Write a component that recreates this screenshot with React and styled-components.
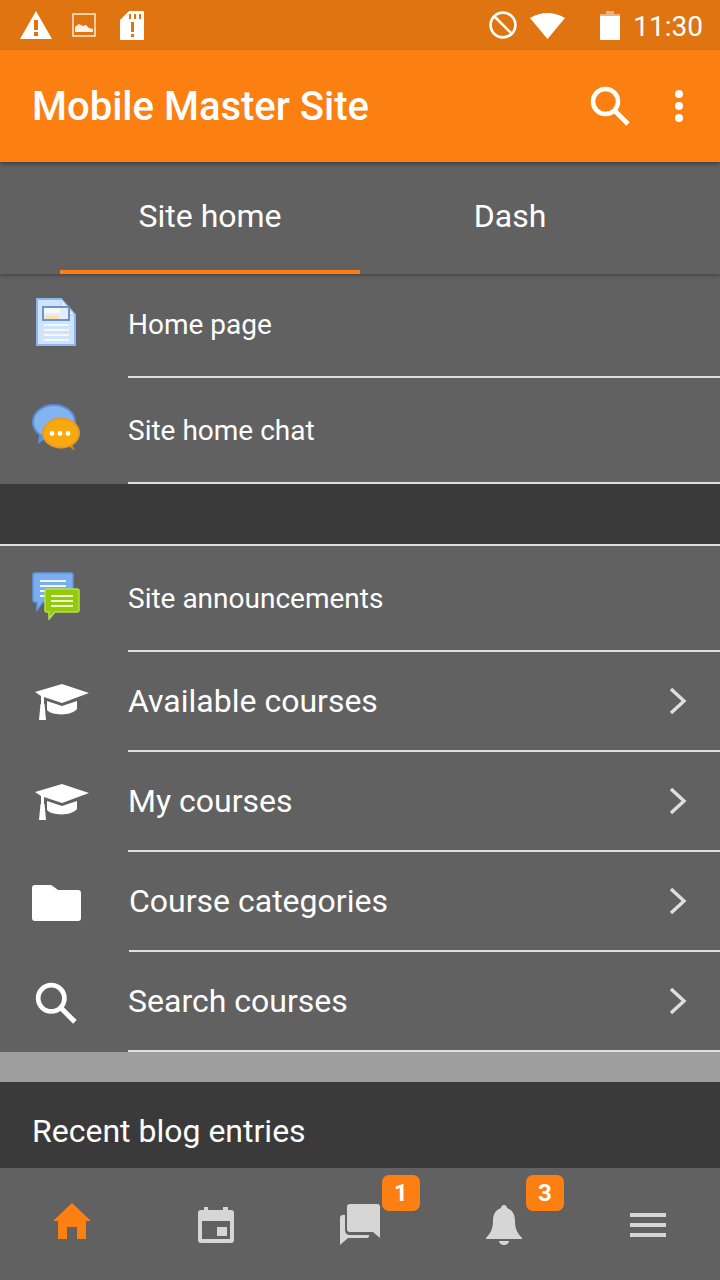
import React from 'react'
import styled, { createGlobalStyle } from 'styled-components'

const GlobalStyle = createGlobalStyle`
  html, body { margin: 0; padding: 0; background: #616161; }
  body { font-family: Roboto, "Liberation Sans", sans-serif; }
`

const WarningIcon = () => (
  <svg width="32" height="28" viewBox="0 0 32 28">
    <path fill="#fff" fillRule="evenodd" d="M16 0 32 28H0ZM14 9v10h4V9ZM14 21v4h4v-4Z" />
  </svg>
)

const PictureIcon = () => (
  <svg width="24" height="24" viewBox="0 0 24 24">
    <rect x="1" y="1" width="22" height="22" fill="none" stroke="#fbe6d2" strokeWidth="1.600" />
    <path fill="#fff2e6" d="M3 19V14L7 11 11 13 14 12 17 15 21 16V19Z" />
  </svg>
)

const SdAlertIcon = () => (
  <svg width="24" height="29" viewBox="0 0 24 29">
    <path fill="#fff" fillRule="evenodd" d="M9 0H23Q24 0 24 1V29H0V9ZM9 3V8H11V3ZM14 3V8H16V3ZM19 3V8H21V3ZM11 11V21H14V11ZM11 23V26H14V23Z" />
  </svg>
)

const BlockIcon = () => (
  <svg width="28" height="28" viewBox="0 0 28 28">
    <circle cx="14" cy="14" r="12.400" fill="none" stroke="#fff" strokeWidth="2.600" />
    <path d="M5 5 23 23" stroke="#fff" strokeWidth="2.600" />
  </svg>
)

const WifiIcon = () => (
  <svg width="35" height="27" viewBox="0 0 35 27">
    <path fill="#fff" d="M0 6Q17.500-4 35 6L17.500 27Z" />
  </svg>
)

const BatteryIcon = () => (
  <svg width="20" height="29" viewBox="0 0 20 29">
    <path fill="#eeb27c" d="M6 0H14V3H20V9H0V3H6Z" />
    <rect y="5" width="20" height="24" fill="#fff" />
  </svg>
)

const SearchIcon = ({ size = 40 }) => (
  <svg width={size} height={size} viewBox="0 0 40 40">
    <circle cx="15.500" cy="15.500" r="12.500" fill="none" stroke="#fff" strokeWidth="4.500" />
    <path d="M24.500 24.500 38 38" stroke="#fff" strokeWidth="4.800" />
  </svg>
)

const DotsIcon = () => (
  <svg width="10" height="34" viewBox="0 0 10 34">
    <circle cx="5" cy="5" r="4" fill="#fff" />
    <circle cx="5" cy="17" r="4" fill="#fff" />
    <circle cx="5" cy="29" r="4" fill="#fff" />
  </svg>
)

const PageIcon = () => (
  <svg width="40" height="48" viewBox="0 0 40 48">
    <path fill="#cfe4fa" stroke="#8ab8ee" strokeWidth="2" d="M1 1H25L39 17V47H1Z" />
    <path fill="#e4eefa" stroke="#a9c8ee" strokeWidth="1" d="M25 1V17H39Z" />
    <rect x="7" y="9" width="26" height="13" fill="#e3eefa" stroke="#6d93c8" strokeWidth="2" />
    <rect x="8" y="10" width="16" height="5" fill="#f6fafe" />
    <rect x="9" y="18" width="14" height="3" fill="#f6e1b0" />
    <path stroke="#f4f8fc" strokeWidth="2" d="M8 27H33M8 32H33M8 37H33M8 42H33" />
  </svg>
)

const ChatIcon = () => (
  <svg width="48" height="48" viewBox="0 0 48 48">
    <path fill="#5b8fdc" d="M7 30 6 40 16 33Z" />
    <ellipse cx="22" cy="18" rx="21" ry="17" fill="#82b4f2" stroke="#5b8fdc" strokeWidth="2" />
    <path fill="#d9861a" d="M34 40 43 47 39 38Z" />
    <ellipse cx="29" cy="29" rx="18" ry="14.500" fill="#f7a90f" stroke="#e59a2a" strokeWidth="2" />
    <circle cx="20" cy="29.500" r="2.400" fill="#fff" />
    <circle cx="28" cy="29.500" r="2.400" fill="#fff" />
    <circle cx="36" cy="29.500" r="2.400" fill="#fff" />
  </svg>
)

const AnnounceIcon = () => (
  <svg width="48" height="48" viewBox="0 0 48 48">
    <path fill="#7aaef0" stroke="#6096e0" strokeWidth="1.500" d="M3 1H39Q41 1 41 3V30H11L5 38V30H3Q1 30 1 28V3Q1 1 3 1Z" />
    <path stroke="#f2f7fd" strokeWidth="2" d="M8 9H34M8 14H34M8 19H34M8 24H20" />
    <path fill="#93cb0c" stroke="#b6e04a" strokeWidth="1.500" d="M15 17H45Q47 17 47 19V38Q47 40 45 40H23L17 47V40H15Q13 40 13 38V19Q13 17 15 17Z" />
    <path stroke="#edf8cf" strokeWidth="2" d="M19 24H41M19 29H41M19 34H41" />
  </svg>
)

const CapIcon = () => (
  <svg width="54" height="36" viewBox="0 0 54 36">
    <path fill="#fff" d="M27 0 54 9 27 19 9 13V20H6V12L0 8Z" />
    <path fill="#fff" d="M12 17 27 22 42 17V25C37 32 17 32 12 26Z" />
    <path fill="#fff" d="M5.500 20H9.500L11 36H4Z" />
  </svg>
)

const FolderIcon = () => (
  <svg width="49" height="36" viewBox="0 0 49 36">
    <path fill="#fff" d="M3 0H18Q20 0 22 2L26 5H46Q49 5 49 8V33Q49 36 46 36H3Q0 36 0 33V3Q0 0 3 0Z" />
  </svg>
)

const Chevron = () => (
  <svg width="18" height="28" viewBox="0 0 18 28">
    <path d="M2 2 15 14 2 26" fill="none" stroke="#dedede" strokeWidth="3.400" />
  </svg>
)

const HomeIcon = () => (
  <svg width="38" height="36" viewBox="0 0 38 36">
    <path fill="#fb8011" d="M19 0 38 18H33V36H24V24H14V36H5V18H0Z" />
  </svg>
)

const CalendarIcon = () => (
  <svg width="36" height="36" viewBox="0 0 36 36">
    <path fill="#d6d6d6" fillRule="evenodd" d="M6 0H10V3H25V0H30V3H33Q36 3 36 6V33Q36 36 33 36H3Q0 36 0 33V6Q0 3 3 3H6ZM4 14V32H32V14ZM19 20H29V29H19Z" />
  </svg>
)

const ForumIcon = () => (
  <svg width="40" height="41" viewBox="0 0 40 41">
    <path fill="#d6d6d6" d="M10 0H37Q40 0 40 3V34L33 28H10Q7 28 7 25V3Q7 0 10 0Z" />
    <path fill="#d6d6d6" d="M5 11V26Q5 31 10 31H29V32Q29 34 27 34H8L0 41V14Q0 11 3 11Z" />
  </svg>
)

const BellIcon = () => (
  <svg width="36" height="40" viewBox="0 0 36 40">
    <path fill="#d6d6d6" d="M18 0c2 0 3 1.500 3 3 6 2 8 7 8 13 0 7 2 12 7 17v1H0v-1c5-5 7-10 7-17 0-6 2-11 8-13 0-1.500 1-3 3-3zM13 36h10c0 2-2 4-5 4s-5-2-5-4z" />
  </svg>
)

const topRows = [
  { label: 'Home page', icon: <PageIcon />, height: 104, lift: 8, textLift: 2 },
  { label: 'Site home chat', icon: <ChatIcon />, height: 106, lift: 6 },
]

const siteRows = [
  { label: 'Site announcements', icon: <AnnounceIcon />, height: 106, lift: 6 },
  { label: 'Available courses', icon: <CapIcon />, height: 100, big: true, more: true, shift: 12 },
  { label: 'My courses', icon: <CapIcon />, height: 100, big: true, more: true, shift: 12 },
  { label: 'Course categories', icon: <FolderIcon />, height: 100, big: true, more: true, nudge: 1, drop: 2 },
  { label: 'Search courses', icon: <SearchIcon size={42} />, height: 100, big: true, more: true, drop: 2 },
]

export default function App() {
  return (
    <Screen>
      <GlobalStyle />
      <StatusBar>
        <StatusGroup>
          <WarningIcon />
          <StatusSlot $left={20}><PictureIcon /></StatusSlot>
          <StatusSlot $left={24}><SdAlertIcon /></StatusSlot>
        </StatusGroup>
        <StatusGroup>
          <BlockIcon />
          <StatusSlot $left={13}><WifiIcon /></StatusSlot>
          <StatusSlot $left={35}><BatteryIcon /></StatusSlot>
          <Clock>11:30</Clock>
        </StatusGroup>
      </StatusBar>

      <AppBar>
        <Title>Mobile Master Site</Title>
        <AppBarActions>
          <SearchIcon />
          <DotsIcon />
        </AppBarActions>
      </AppBar>

      <Tabs>
        <Tab $active>Site home</Tab>
        <Tab>Dash</Tab>
      </Tabs>

      <Content>
        <RowGroup>
          {topRows.map((row) => <MenuRow key={row.label} row={row} />)}
        </RowGroup>
        <DarkGap />
        <RowGroup $ruled>
          {siteRows.map((row) => <MenuRow key={row.label} row={row} />)}
        </RowGroup>
        <LightGap />
        <BlogSection>Recent blog entries</BlogSection>
      </Content>

      <BottomNav>
        <NavItem $lift={7}><HomeIcon /></NavItem>
        <NavItem><CalendarIcon /></NavItem>
        <NavItem><ForumIcon /><Badge>1</Badge></NavItem>
        <NavItem><BellIcon /><Badge>3</Badge></NavItem>
        <NavItem><MenuBars><span /><span /><span /></MenuBars></NavItem>
      </BottomNav>
    </Screen>
  )
}

function MenuRow({ row }) {
  return (
    <Row $height={row.height}>
      <RowIcon $lift={row.lift} $shift={row.shift} $drop={row.drop}>{row.icon}</RowIcon>
      <RowBody $nudge={row.nudge} $big={row.big} $lift={row.textLift}>
        <span>{row.label}</span>
        {row.more && <Chevron />}
      </RowBody>
    </Row>
  )
}

const Screen = styled.div`
  width: 720px;
  height: 1280px;
  display: flex;
  flex-direction: column;
  overflow: hidden;
  background: #616161;
  color: #fff;
`

const StatusBar = styled.div`
  height: 50px;
  flex: none;
  display: flex;
  align-items: center;
  justify-content: space-between;
  padding: 0 17px 0 20px;
  background: #df7411;
`

const StatusGroup = styled.div`
  display: flex;
  align-items: center;
`

const StatusSlot = styled.div`
  display: flex;
  margin-left: ${(p) => p.$left}px;
`

const Clock = styled.div`
  margin-left: 13px;
  padding-top: 3px;
  font-size: 28px;
  line-height: 47px;
  color: #fff;
`

const AppBar = styled.div`
  height: 112px;
  flex: none;
  display: flex;
  align-items: center;
  justify-content: space-between;
  padding: 0 36px 0 32px;
  background: #fb8011;
  box-shadow: 0 2px 4px rgba(0, 0, 0, 0.35);
  position: relative;
  z-index: 2;
`

const Title = styled.div`
  font-size: 40px;
  font-weight: 500;
`

const AppBarActions = styled.div`
  display: flex;
  align-items: center;
  gap: 44px;
`

const Tabs = styled.div`
  height: 112px;
  flex: none;
  display: flex;
  padding: 0 60px;
  background: #616161;
  box-shadow: 0 2px 3px rgba(0, 0, 0, 0.25);
  position: relative;
  z-index: 1;
`

const Tab = styled.div`
  flex: 1;
  display: flex;
  align-items: center;
  justify-content: center;
  font-size: 32px;
  border-bottom: 4px solid ${(p) => (p.$active ? '#fb8011' : 'transparent')};
`

const Content = styled.div`
  flex: 1;
  min-height: 0;
  display: flex;
  flex-direction: column;
`

const RowGroup = styled.div`
  flex: none;
  border-top: ${(p) => (p.$ruled ? '2px solid #e0e0e0' : 'none')};
`

const Row = styled.div`
  height: ${(p) => p.$height}px;
  display: flex;
`

const RowIcon = styled.div`
  width: 112px;
  margin-right: 16px;
  box-sizing: border-box;
  flex: none;
  display: flex;
  align-items: center;
  justify-content: center;
  padding-top: ${(p) => p.$drop || 0}px;
  padding-bottom: ${(p) => p.$lift || 0}px;
  padding-left: ${(p) => p.$shift || 0}px;
`

const RowBody = styled.div`
  flex: 1;
  display: flex;
  align-items: center;
  justify-content: space-between;
  margin-left: ${(p) => p.$nudge || 0}px;
  padding-right: 33px;
  padding-bottom: ${(p) => p.$lift || 0}px;
  font-size: ${(p) => (p.$big ? 32 : 28)}px;
  border-bottom: 2px solid #e0e0e0;
`

const DarkGap = styled.div`
  height: 60px;
  flex: none;
  background: #3a3a3a;
`

const LightGap = styled.div`
  height: 30px;
  flex: none;
  background: #9e9e9e;
`

const BlogSection = styled.div`
  flex: 1;
  padding: 30px 32px 0;
  font-size: 32px;
  line-height: 38px;
  background: #3a3a3a;
`

const BottomNav = styled.div`
  height: 112px;
  flex: none;
  display: grid;
  grid-template-columns: repeat(5, 1fr);
  background: #616161;
`

const NavItem = styled.div`
  position: relative;
  display: flex;
  align-items: center;
  justify-content: center;
  padding-top: 1px;
  padding-bottom: ${(p) => p.$lift || 0}px;
`

const Badge = styled.div`
  position: absolute;
  left: 94px;
  top: 7px;
  width: 38px;
  height: 36px;
  display: flex;
  align-items: center;
  justify-content: center;
  border-radius: 7px;
  background: #fb8011;
  font-size: 24px;
  font-weight: 700;
`

const MenuBars = styled.div`
  width: 36px;
  display: flex;
  flex-direction: column;
  gap: 6px;

  span {
    height: 4px;
    background: #d6d6d6;
  }
`
